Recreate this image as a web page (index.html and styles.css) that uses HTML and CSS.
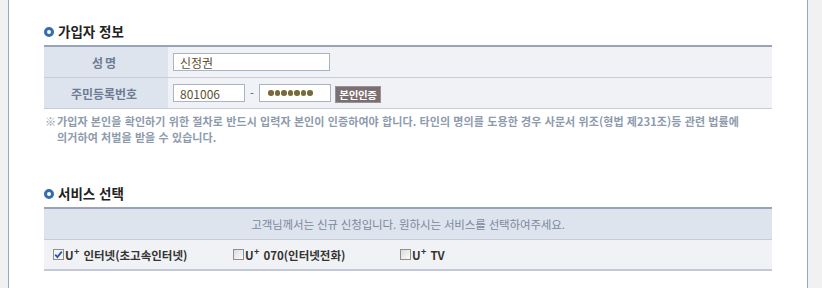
FILE: index.html
```html
<!DOCTYPE html>
<html lang="ko">
<head>
<meta charset="utf-8">
<link rel="stylesheet" href="styles.css">
</head>
<body>
<div class="page">
  <div class="strip strip-left"></div>
  <main class="main">
    <h2 class="sec-title"><span class="ring"></span>가입자 정보</h2>
    <div class="table">
      <div class="row">
        <div class="label label-wide">성명</div>
        <div class="value">
          <div class="field field-name">신정권</div>
        </div>
      </div>
      <div class="row">
        <div class="label">주민등록번호</div>
        <div class="value">
          <div class="field field-short">801006</div>
          <span class="dash">-</span>
          <div class="field field-short field-pw"><i></i><i></i><i></i><i></i><i></i><i></i><i></i></div>
          <button class="btn-auth" type="button">본인인증</button>
        </div>
      </div>
    </div>
    <p class="note"><span class="mark">※</span><span>가입자 본인을 확인하기 위한 절차로 반드시 입력자 본인이 인증하여야 합니다. 타인의 명의를 도용한 경우 사문서 위조(형법 제231조)등 관련 법률에<br>의거하여 처벌을 받을 수 있습니다.</span></p>

    <h2 class="sec-title sec-title-2"><span class="ring"></span>서비스 선택</h2>
    <div class="table table-svc">
      <div class="row row-info">고객님께서는 신규 신청입니다. 원하시는 서비스를 선택하여주세요.</div>
      <div class="row row-check">
        <label class="opt opt-1"><span class="cb checked"><svg viewBox="0 0 9 9" width="9" height="9"><path d="M1.2 4.6 L3.4 7 L7.8 1.6" fill="none" stroke="#2a56b8" stroke-width="1.8"/></svg></span>U<sup>+</sup>인터넷(초고속인터넷)</label>
        <label class="opt opt-2"><span class="cb"></span>U<sup>+</sup>070(인터넷전화)</label>
        <label class="opt opt-3"><span class="cb"></span>U<sup>+</sup>TV</label>
      </div>
    </div>
  </main>
  <div class="strip strip-right"></div>
</div>
</body>
</html>
```

FILE: styles.css
```css
* { box-sizing: border-box; }
html, body { margin: 0; padding: 0; background: #fff; }
body {
  font-family: "Noto Sans CJK KR", "Noto Sans", sans-serif;
  font-size: 11px;
  color: #333;
}
.page {
  display: flex;
  width: 822px;
  height: 288px;
  overflow: hidden;
}
.strip { background: #f1f1f1; }
.strip-left { width: 9px; border-right: 1px solid #9aa6bb; }
.strip-right { flex: 1; border-left: 1px solid #9aa6bb; }
.main {
  width: 798px;
  padding: 22px 0 0 35px;
}
.sec-title {
  display: flex;
  align-items: center;
  height: 18px;
  margin: 0 0 5px;
  font-size: 13.5px;
  font-weight: 700;
  color: #222;
  letter-spacing: 0;
}
.ring {
  width: 10px;
  height: 10px;
  border: 3px solid #336cb0;
  border-radius: 50%;
  margin: 1px 4px 0 0;
}
.sec-title-2 { margin-top: 39px; }
.table {
  width: 728px;
  border-top: 2px solid #98a4bb;
}
.row {
  display: flex;
  height: 31px;
  border-bottom: 1px solid #c6cdd9;
}
.label {
  width: 124px;
  background: #dee4ed;
  display: flex;
  align-items: center;
  justify-content: center;
  font-weight: 700;
  color: #6d7c94;
  font-size: 12px;
  padding-right: 4px;
}
.label-wide { letter-spacing: 2px; padding-right: 2px; }
.value {
  flex: 1;
  background: #f1f2f5;
  display: flex;
  align-items: center;
  padding-left: 5px;
}
.field {
  height: 18px;
  background: #fff;
  border: 1px solid #a7b3c8;
  display: flex;
  align-items: center;
  padding-left: 6px;
  font-size: 12px;
  color: #5e5232;
}
.field-name { width: 157px; }
.field-short { width: 72px; }
.dash {
  width: 14px;
  text-align: center;
  color: #555;
  font-size: 11px;
}
.field-pw { gap: 1px; padding-left: 8px; }
.field-pw i {
  display: block;
  flex: none;
  width: 5.5px;
  height: 5.5px;
  border-radius: 50%;
  background: #7a6a3a;
}
.btn-auth {
  margin: 3px 0 0 4px;
  height: 17px;
  width: 46px;
  padding: 0;
  border: 1px solid #9a9196;
  background: #7b6f72;
  color: #fff;
  font-family: inherit;
  font-size: 10.5px;
  font-weight: 700;
  letter-spacing: -0.3px;
}
.note {
  display: flex;
  margin: 4px 0 0 1px;
  font-size: 11px;
  line-height: 16px;
  font-weight: 700;
  color: #8e9aad;
  letter-spacing: 0.1px;
}
.mark { width: 12px; font-weight: 400; }
.row-info {
  background: #dee4ed;
  align-items: center;
  justify-content: center;
  color: #7b889e;
  font-size: 11.5px;
  letter-spacing: -0.15px;
}
.row-check {
  background: #f1f2f5;
  align-items: center;
  border-bottom: 2px solid #c3c9d6;
}
.opt {
  display: flex;
  align-items: center;
  font-weight: 700;
  font-size: 11.5px;
  color: #333;
}
.opt sup {
  font-size: 9px;
  line-height: 1;
  margin: 0 4px 0 0.5px;
  position: relative;
  top: 0;
  align-self: flex-start;
}
.opt-1 { margin-left: 9px; width: 180px; }
.opt-2 { width: 167px; }
.cb {
  width: 11px;
  height: 11px;
  border: 1px solid #8f8f8f;
  background: linear-gradient(135deg, #dcdcdc, #fbfbfb);
  margin-right: 1px;
  display: flex;
  align-items: center;
  justify-content: center;
}
.cb.checked { background: #f4f4f4; }
```
